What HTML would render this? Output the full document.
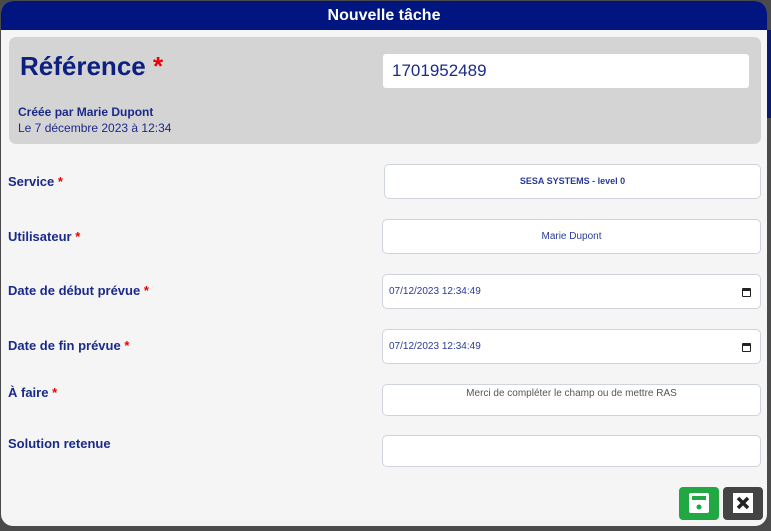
<!DOCTYPE html><html><head><style>
*{box-sizing:border-box;margin:0;padding:0}
body{width:771px;height:531px;background:#4b4b4b;font-family:"Liberation Sans",sans-serif;position:relative;overflow:hidden}
.nav{position:absolute;left:760px;top:30px;width:20px;height:88px;background:#0c1a6e}
.m{position:absolute;left:1px;top:1px;width:766px;height:525px;background:#f5f5f5;border-radius:12px;overflow:hidden}
.h{height:29px;background:#00157f;color:#fff;text-align:center;font-weight:bold;font-size:16px;line-height:29px}
.ref{position:absolute;left:8px;top:36px;width:752px;height:107px;background:#d4d4d4;border-radius:7px}
.ref .t{position:absolute;left:11px;top:14px;font-size:26px;color:#0d2080;font-weight:bold}
.st{color:#e00}
.ref .in{position:absolute;left:374px;top:17px;width:366px;height:34px;background:#fff;border-radius:3px;font-size:17px;color:#1a2a8a;padding:7px 9px}
.ref .c{position:absolute;left:9px;top:67px;font-size:12px;color:#1a2a8a;line-height:16px}
.l{position:absolute;left:7px;font-size:13px;font-weight:bold;color:#1a2a8a}
.f{position:absolute;left:381px;width:379px;height:35px;background:#fff;border:1px solid #cfd4dc;border-radius:5px;font-size:10px;color:#2a3a9a;text-align:center;line-height:33px}
.d{text-align:left;padding-left:6px}
.cal{position:absolute;right:9px;top:13px;width:9px;height:9px;border:1.5px solid #222;border-top-width:3px;border-radius:1px}
.b{position:absolute;top:486px;width:40px;height:33px;border-radius:4px}
</style></head><body>
<div class="nav"></div>
<div class="m">
<div class="h">Nouvelle tâche</div>
<div class="ref"><div class="t">Référence <span class="st">*</span></div><div class="in">1701952489</div>
<div class="c"><b>Créée par Marie Dupont</b><br>Le 7 décembre 2023 à 12:34</div></div>
<div class="l" style="top:173px">Service <span class="st">*</span></div>
<div class="f" style="top:163px;left:383px;width:377px;font-weight:bold;font-size:9px">SESA SYSTEMS - level 0</div>
<div class="l" style="top:228px">Utilisateur <span class="st">*</span></div>
<div class="f" style="top:218px">Marie Dupont</div>
<div class="l" style="top:282px">Date de début prévue <span class="st">*</span></div>
<div class="f d" style="top:273px">07/12/2023 12:34:49<span class="cal"></span></div>
<div class="l" style="top:337px">Date de fin prévue <span class="st">*</span></div>
<div class="f d" style="top:328px">07/12/2023 12:34:49<span class="cal"></span></div>
<div class="l" style="top:384px">À faire <span class="st">*</span></div>
<div class="f" style="top:383px;height:32px;line-height:18px;color:#555">Merci de compléter le champ ou de mettre RAS</div>
<div class="l" style="top:435px">Solution retenue</div>
<div class="f" style="top:434px;height:32px"></div>
<div class="b" style="left:678px;background:#22a843"><svg width="40" height="33" viewBox="0 0 40 33"><rect x="10" y="6" width="20" height="20" rx="2" fill="#fff"/><rect x="13" y="9" width="14" height="4" fill="#22a843"/><circle cx="20" cy="20" r="2.5" fill="#22a843"/></svg></div>
<div class="b" style="left:722px;background:#444"><svg width="40" height="33" viewBox="0 0 40 33"><rect x="10" y="6" width="20" height="20" fill="#fff"/><path d="M15 11l10 10M25 11l-10 10" stroke="#222" stroke-width="3.5"/></svg></div>
</div>
</body></html>
